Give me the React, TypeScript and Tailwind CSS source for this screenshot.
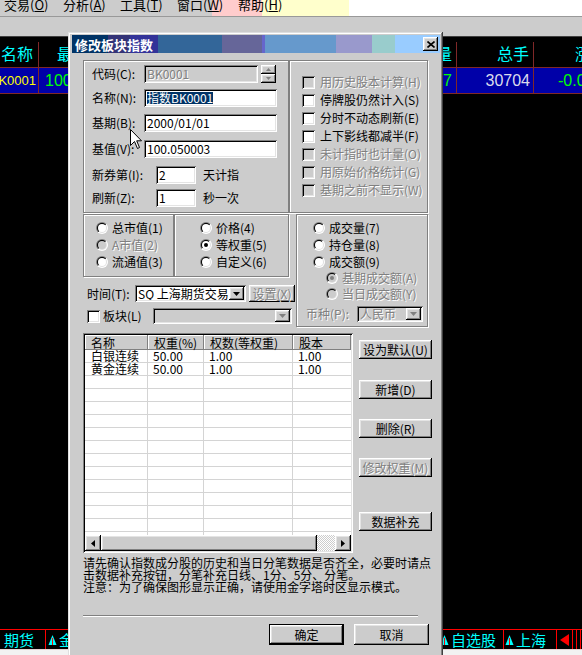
import React from "react";

const raised =
  "bg-[#cccccc] shadow-[inset_-1px_-1px_#000,inset_1px_1px_#fff,inset_-2px_-2px_#808080,inset_2px_2px_#e4e4e4]";
const sunken =
  "shadow-[inset_1px_1px_#808080,inset_-1px_-1px_#fff,inset_2px_2px_#000,inset_-2px_-2px_#e4e4e4]";
const etched = "border border-[#808080] shadow-[inset_1px_1px_#fff,1px_1px_#fff]";
const dim = "text-[#808080] [text-shadow:1px_1px_0_#fff]";

function Down({ gray }: { gray?: boolean }) {
  return (
    <svg width="7" height="4" viewBox="0 0 7 4">
      <path d="M0 0h7L3.5 4z" fill={gray ? "#808080" : "#000"} />
    </svg>
  );
}

function Check({ off }: { off?: boolean }) {
  return (
    <span
      className={`inline-block w-[13px] h-[13px] shrink-0 ${off ? "bg-[#cccccc]" : "bg-white"} ${sunken}`}
    />
  );
}

function Radio({ on, off }: { on?: boolean; off?: boolean }) {
  return (
    <span className="flex w-[12px] h-[12px] shrink-0 rounded-full p-[1px] bg-[linear-gradient(135deg,#808080_50%,#ffffff_50%)]">
      <span className="flex w-full h-full rounded-full p-[1px] bg-[linear-gradient(135deg,#000000_50%,#dfdfdf_50%)]">
        <span
          className={`flex w-full h-full rounded-full items-center justify-center ${off ? "bg-[#cccccc]" : "bg-white"}`}
        >
          {on && (
            <span className={`w-[4px] h-[4px] rounded-full ${off ? "bg-[#808080]" : "bg-black"}`} />
          )}
        </span>
      </span>
    </span>
  );
}

function Tri() {
  return (
    <svg width="9" height="12" viewBox="0 0 9 12" className="shrink-0">
      <path d="M4.5 1L8.5 11H0.5z" fill="#00ffff" />
      <path d="M4.5 4v7" stroke="#ff0000" strokeWidth="1" />
    </svg>
  );
}

const checks: [string, boolean][] = [
  ["用历史股本计算(H)", true],
  ["停牌股仍然计入(S)", false],
  ["分时不动态刷新(E)", false],
  ["上下影线都减半(F)", false],
  ["未计指时也计量(O)", true],
  ["用原始价格统计(G)", true],
  ["基期之前不显示(W)", true],
];

const rows = [
  ["白银连续", "50.00", "1.00", "1.00"],
  ["黄金连续", "50.00", "1.00", "1.00"],
  ...Array.from({ length: 13 }, () => ["", "", "", ""]),
];

export default function App() {
  return (
    <div className="relative w-[582px] h-[655px] overflow-hidden bg-black flex flex-col font-['Noto_Sans_CJK_SC',sans-serif]">
      {/* menu bar */}
      <div className="h-[16px] shrink-0 flex items-start overflow-hidden pl-[4px] text-[13px] leading-[10px] text-black bg-[linear-gradient(to_right,#cccccc_212px,#ffcccc_212px,#ffcccc_262px,#ffffcc_262px,#ffffcc_349px,#ffffff_349px)]">
        <span className="w-[59px] shrink-0">交易(<u>O</u>)</span>
        <span className="w-[57px] shrink-0">分析(<u>A</u>)</span>
        <span className="w-[57px] shrink-0">工具(<u>T</u>)</span>
        <span className="w-[61px] shrink-0">窗口(<u>W</u>)</span>
        <span className="shrink-0">帮助(<u>H</u>)</span>
      </div>
      <div className="h-[1px] shrink-0 bg-[#999999]" />
      <div className="h-[19px] shrink-0 bg-[#cccccc]" />
      <div className="h-[1px] shrink-0 bg-[#404040]" />

      {/* quote list */}
      <div className="flex-1 flex flex-col font-['Liberation_Sans','Noto_Sans_CJK_SC',sans-serif] text-[16px] leading-[16px] whitespace-nowrap">
        <div className="mt-[5px] h-[26px] flex border-b border-[#802828] text-[#00ffff]">
          <div className="w-[39px] shrink-0 border-r border-[#802828] flex items-center justify-end pr-[5px] overflow-hidden">名称</div>
          <div className="w-[418px] shrink-0 border-r border-[#802828] flex items-center justify-between pl-[18px] pr-[4px]">
            <span>最新</span>
            <span>现量</span>
          </div>
          <div className="w-[77px] shrink-0 border-r border-[#802828] flex items-center justify-end pr-[4px]">总手</div>
          <div className="w-[90px] shrink-0 flex items-center pl-[41px]">涨幅</div>
        </div>
        <div className="h-[26px] flex border-b border-[#802828] bg-[#0000a8]">
          <div className="w-[39px] shrink-0 border-r border-[#802828] flex items-center justify-end pr-[2px] overflow-hidden text-[#ffff00] text-[13px]">
            BK0001
          </div>
          <div className="w-[418px] shrink-0 border-r border-[#802828] flex items-center justify-between pl-[6px] pr-[4px] text-[#00ff00]">
            <span>100.05</span>
            <span>7</span>
          </div>
          <div className="w-[77px] shrink-0 border-r border-[#802828] flex items-center justify-end pr-[3px] text-[#dcdcec]">
            30704
          </div>
          <div className="w-[90px] shrink-0 flex items-center pl-[24px] text-[#00ff00]">-0.09</div>
        </div>
      </div>

      {/* bottom tabs */}
      <div className="h-[20px] shrink-0 flex border-t border-[#ff0000] text-[#00ffff] text-[15px] leading-[15px] whitespace-nowrap">
        <div className="w-[45px] shrink-0 flex items-center pl-[4px]">期货</div>
        <div className="w-[1px] shrink-0 bg-[#ff0000]" />
        <div className="w-[394px] shrink-0 flex items-center gap-[2px] pl-[2px]">
          <Tri />
          <span>金融期货</span>
        </div>
        <div className="w-[63px] shrink-0 flex items-center gap-[2px]">
          <Tri />
          <span>自选股</span>
        </div>
        <div className="w-[1px] shrink-0 bg-[#ff0000]" />
        <div className="w-[52px] shrink-0 flex items-center gap-[2px] pl-[1px]">
          <Tri />
          <span>上海</span>
        </div>
        <div className="w-[1px] shrink-0 bg-[#ff0000]" />
        <div className="w-[15px] shrink-0 flex items-center justify-center">
          <svg width="9" height="12" viewBox="0 0 9 12">
            <path d="M9 0V12L0 6z" fill="#ff0000" />
          </svg>
        </div>
        <div className="w-[1px] shrink-0 bg-[#ff0000]" />
        <div className="w-[3px] shrink-0" />
        <div className="w-[1px] shrink-0 bg-[#ff0000]" />
        <div className="w-[3px] shrink-0" />
        <div className="w-[1px] shrink-0 bg-[#ff0000]" />
      </div>
      <div className="h-[6px] shrink-0 bg-[#f2f2f2] border-t border-[#e6d0d0]" />

      {/* dialog */}
      <div className="absolute left-[68px] top-[32px] w-[375px] h-[640px] bg-[#cccccc] pl-[4px] pr-[3px] pt-[3px] text-[12px] leading-[12px] text-black shadow-[inset_-1px_0_#404040,inset_1px_1px_#dfdfdf,inset_-2px_0_#808080,inset_2px_2px_#ffffff]">
        <div className="relative h-[18px] flex">
          <div className="w-[36px] bg-[#003366]" />
          <div className="w-[22px] bg-[#333377]" />
          <div className="w-[28px] bg-[#333399]" />
          <div className="w-[64px] bg-[#336699]" />
          <div className="w-[40px] bg-[#666699]" />
          <div className="w-[3px] bg-[#6666cc]" />
          <div className="w-[71px] bg-[#6699cc]" />
          <div className="w-[36px] bg-[#9999cc]" />
          <div className="w-[23px] bg-[#99cccc]" />
          <div className="flex-1 bg-[#99ccff]" />
          <span className="absolute left-[3px] top-0 h-full flex items-center text-white font-bold text-[13px] leading-[13px]">
            修改板块指数
          </span>
          <span className={`absolute right-[2px] top-[2px] w-[15px] h-[14px] flex items-center justify-center ${raised}`}>
            <svg width="8" height="7" viewBox="0 0 8 7">
              <path d="M0.5 0.5L7.5 6.5M7.5 0.5L0.5 6.5" stroke="#000" strokeWidth="1.6" />
            </svg>
          </span>
        </div>

        <div className="pl-[11px] pt-[7px] flex flex-col">
          {/* section 1 */}
          <div className="flex h-[153px]">
            <div className={`w-[206px] h-full ${etched} flex flex-col`}>
              <div className="flex items-center h-[18px] mt-[4px]">
                <span className="w-[60px] pl-[8px] shrink-0">代码(C):</span>
                <span className={`w-[114px] h-full bg-[#cccccc] ${sunken} flex items-center px-[3px] ${dim}`}>BK0001</span>
                <span className="ml-[3px] w-[15px] h-full flex flex-col">
                  <span className={`h-[9px] flex items-center justify-center ${raised}`}>
                    <svg width="5" height="3" viewBox="0 0 5 3"><path d="M0 3h5L2.5 0z" fill="#808080" /></svg>
                  </span>
                  <span className={`h-[9px] flex items-center justify-center ${raised}`}>
                    <svg width="5" height="3" viewBox="0 0 5 3"><path d="M0 0h5L2.5 3z" fill="#808080" /></svg>
                  </span>
                </span>
              </div>
              <div className="flex items-center h-[18px] mt-[6px]">
                <span className="w-[60px] pl-[8px] shrink-0">名称(N):</span>
                <span className={`w-[133px] h-full bg-white ${sunken} flex items-center px-[3px]`}>
                  <span className="bg-[#003366] text-white">指数BK0001</span>
                </span>
              </div>
              <div className="flex items-center h-[18px] mt-[7px]">
                <span className="w-[60px] pl-[8px] shrink-0">基期(B):</span>
                <span className={`w-[133px] h-full bg-white ${sunken} flex items-center px-[3px]`}>2000/01/01</span>
              </div>
              <div className="flex items-center h-[18px] mt-[8px]">
                <span className="w-[60px] pl-[8px] shrink-0">基值(V):</span>
                <span className={`w-[133px] h-full bg-white ${sunken} flex items-center px-[3px]`}>100.050003</span>
              </div>
              <div className="flex items-center h-[18px] mt-[8px]">
                <span className="w-[72px] pl-[8px] shrink-0">新券第(I):</span>
                <span className={`w-[40px] h-full bg-white ${sunken} flex items-center px-[3px]`}>2</span>
                <span className="ml-[7px]">天计指</span>
              </div>
              <div className="flex items-center h-[18px] mt-[5px]">
                <span className="w-[72px] pl-[8px] shrink-0">刷新(Z):</span>
                <span className={`w-[40px] h-full bg-white ${sunken} flex items-center px-[3px]`}>1</span>
                <span className="ml-[7px]">秒一次</span>
              </div>
            </div>
            <div className={`w-[139px] h-full ${etched} pl-[12px] pt-[12px] flex flex-col`}>
              {checks.map(([t, off]) => (
                <div key={t} className="flex items-center h-[18px]">
                  <Check off={off} />
                  <span className={`ml-[5px] whitespace-nowrap ${off ? dim : ""}`}>{t}</span>
                </div>
              ))}
            </div>
          </div>

          {/* section 2 */}
          <div className="flex mt-[1px] h-[113px]">
            <div className="w-[213px] flex flex-col">
              <div className="flex h-[63px]">
                <div className={`w-[91px] h-full ${etched} pl-[12px] pt-[4px] flex flex-col`}>
                  <div className="flex items-center h-[17px]"><Radio /><span className="ml-[4px]">总市值(1)</span></div>
                  <div className="flex items-center h-[17px]"><Radio off /><span className={`ml-[4px] ${dim}`}>A市值(2)</span></div>
                  <div className="flex items-center h-[17px]"><Radio /><span className="ml-[4px]">流通值(3)</span></div>
                </div>
                <div className={`w-[115px] h-full ${etched} pl-[25px] pt-[4px] flex flex-col`}>
                  <div className="flex items-center h-[17px]"><Radio /><span className="ml-[4px]">价格(4)</span></div>
                  <div className="flex items-center h-[17px]"><Radio on /><span className="ml-[4px]">等权重(5)</span></div>
                  <div className="flex items-center h-[17px]"><Radio /><span className="ml-[4px]">自定义(6)</span></div>
                </div>
              </div>
              <div className="flex items-center h-[17px] mt-[8px] pl-[4px]">
                <span className="w-[48px] shrink-0">时间(T):</span>
                <span className={`w-[111px] h-full bg-white ${sunken} p-[2px] flex`}>
                  <span className="flex-1 flex items-center pl-[1px] whitespace-nowrap overflow-hidden">SQ 上海期货交易</span>
                  <span className={`w-[15px] h-full flex items-center justify-center ${raised}`}><Down /></span>
                </span>
                <span className={`ml-[3px] w-[46px] h-full flex items-center justify-center ${raised}`}>
                  <span className={dim}>设置(X)</span>
                </span>
              </div>
              <div className="flex items-center h-[16px] mt-[6px] pl-[4px]">
                <Check />
                <span className="ml-[3px] w-[50px] shrink-0">板块(L)</span>
                <span className={`w-[139px] h-full bg-[#cccccc] ${sunken} p-[2px] flex justify-end`}>
                  <span className={`w-[15px] h-full flex items-center justify-center ${raised}`}><Down gray /></span>
                </span>
              </div>
            </div>
            <div className={`w-[132px] h-[113px] ${etched} pt-[4px] flex flex-col`}>
              <div className="flex items-center h-[17px] pl-[16px]"><Radio /><span className="ml-[4px]">成交量(7)</span></div>
              <div className="flex items-center h-[17px] pl-[16px]"><Radio /><span className="ml-[4px]">持仓量(8)</span></div>
              <div className="flex items-center h-[17px] pl-[16px]"><Radio /><span className="ml-[4px]">成交额(9)</span></div>
              <div className="flex items-center h-[16px] pl-[29px]"><Radio on off /><span className={`ml-[4px] ${dim}`}>基期成交额(A)</span></div>
              <div className="flex items-center h-[16px] pl-[29px]"><Radio off /><span className={`ml-[4px] ${dim}`}>当日成交额(Y)</span></div>
              <div className="flex items-center h-[16px] mt-[4px] pl-[9px]">
                <span className={`w-[51px] shrink-0 ${dim}`}>币种(P):</span>
                <span className={`w-[66px] h-full bg-[#cccccc] ${sunken} p-[2px] flex`}>
                  <span className={`flex-1 flex items-center pl-[1px] ${dim}`}>人民币</span>
                  <span className={`w-[15px] h-full flex items-center justify-center ${raised}`}><Down gray /></span>
                </span>
              </div>
            </div>
          </div>

          {/* section 3 */}
          <div className="flex mt-[6px]">
            <div className={`w-[270px] h-[220px] bg-white ${sunken} p-[2px] flex flex-col`}>
              <div className="flex h-[15px] shrink-0">
                {[
                  ["名称", "w-[63px]"],
                  ["权重(%)", "w-[56px]"],
                  ["权数(等权重)", "w-[89px]"],
                  ["股本", "w-[58px]"],
                ].map(([t, w]) => (
                  <span
                    key={t}
                    className={`${w} h-full flex items-center pl-[6px] bg-[#cccccc] shadow-[inset_-1px_-1px_#808080,inset_1px_1px_#ffffff]`}
                  >
                    {t}
                  </span>
                ))}
              </div>
              <div className="flex-1 overflow-hidden flex flex-col">
                {rows.map((r, i) => (
                  <div key={i} className="flex h-[13px] shrink-0 border-b border-[#d4d4d4]">
                    <span className="w-[63px] border-r border-[#d4d4d4] pl-[6px] flex items-center">{r[0]}</span>
                    <span className="w-[56px] border-r border-[#d4d4d4] pl-[5px] flex items-center">{r[1]}</span>
                    <span className="w-[89px] border-r border-[#d4d4d4] pl-[5px] flex items-center">{r[2]}</span>
                    <span className="w-[58px] pl-[5px] flex items-center">{r[3]}</span>
                  </div>
                ))}
              </div>
              <div className="h-[16px] shrink-0 flex">
                <span className={`w-[16px] h-full flex items-center justify-center ${raised}`}>
                  <svg width="4" height="7" viewBox="0 0 4 7"><path d="M4 0V7L0 3.5z" fill="#000" /></svg>
                </span>
                <span className={`w-[216px] h-full ${raised}`} />
                <span className="w-[18px] h-full bg-[repeating-conic-gradient(#ffffff_0%_25%,#cccccc_0%_50%)] bg-[length:2px_2px]" />
                <span className={`w-[16px] h-full flex items-center justify-center ${raised}`}>
                  <svg width="4" height="7" viewBox="0 0 4 7"><path d="M0 0V7L4 3.5z" fill="#000" /></svg>
                </span>
              </div>
            </div>
            <div className="ml-[6px] w-[73px] flex flex-col">
              <span className={`mt-[7px] h-[19px] flex items-center justify-center ${raised}`}>设为默认(U)</span>
              <span className={`mt-[21px] h-[19px] flex items-center justify-center ${raised}`}>新增(D)</span>
              <span className={`mt-[20px] h-[19px] flex items-center justify-center ${raised}`}>删除(R)</span>
              <span className={`mt-[20px] h-[19px] flex items-center justify-center ${raised}`}>
                <span className={dim}>修改权重(M)</span>
              </span>
              <span className={`mt-[35px] h-[19px] flex items-center justify-center ${raised}`}>数据补充</span>
            </div>
          </div>

          {/* note */}
          <div className="mt-[4px] flex flex-col whitespace-nowrap">
            <span className="h-[12px]">请先确认指数成分股的历史和当日分笔数据是否齐全，必要时请点</span>
            <span className="h-[12px]">击数据补充按钮，分笔补充日线、1分、5分、分笔。</span>
            <span className="h-[12px]">注意：为了确保图形显示正确，请使用金字塔时区显示模式。</span>
          </div>

          <div className="mt-[22px] w-[335px] h-[2px] border-t border-[#808080] border-b border-b-white" />

          <div className="mt-[7px] flex pl-[186px]">
            <span className="w-[75px] h-[21px] border border-black flex">
              <span className={`flex-1 flex items-center justify-center ${raised}`}>确定</span>
            </span>
            <span className={`ml-[10px] w-[75px] h-[21px] flex items-center justify-center ${raised}`}>取消</span>
          </div>
        </div>
      </div>

      {/* mouse cursor */}
      <svg className="absolute left-[130px] top-[129px]" width="13" height="21" viewBox="0 0 13 21">
        <path
          d="M0.5 0.5V16.5L4.5 12.5L7.5 19.5L9.5 18.5L6.7 11.8H11.5Z"
          fill="#fff"
          stroke="#000"
          strokeWidth="1"
          strokeLinejoin="miter"
        />
      </svg>
    </div>
  );
}
